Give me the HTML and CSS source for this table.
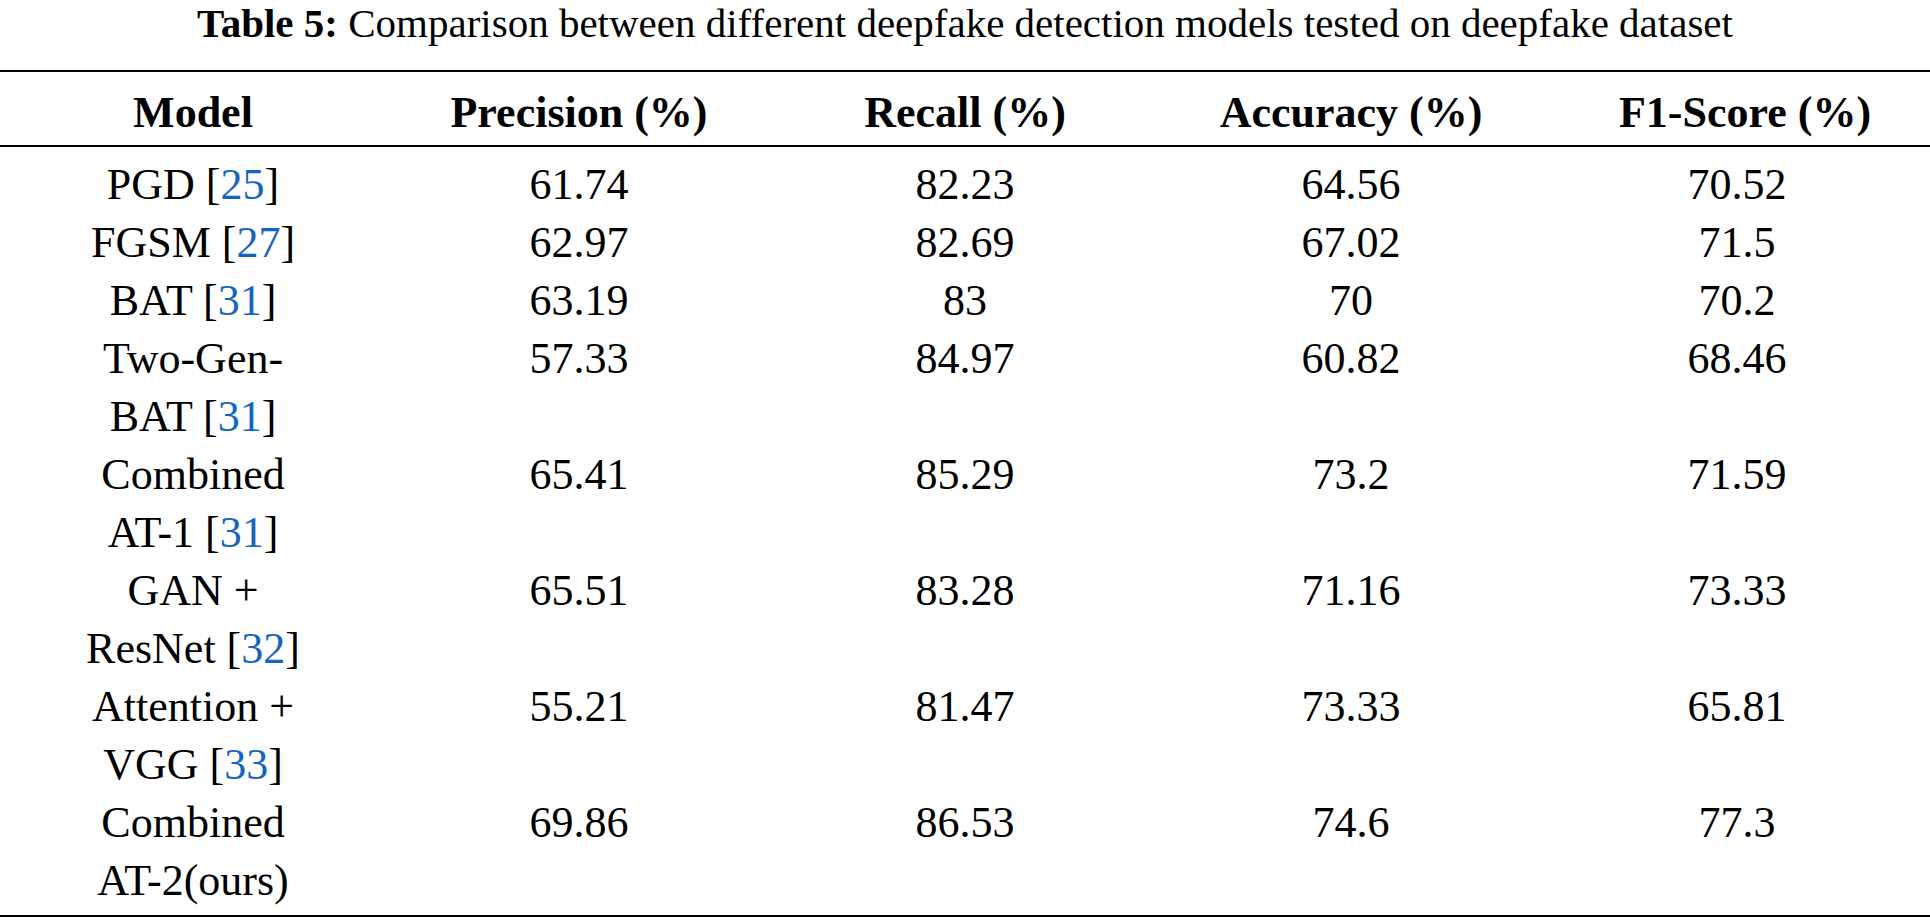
FILE: index.html
```html
<!DOCTYPE html>
<html lang="en">
<head>
<meta charset="utf-8">
<title>Table 5</title>
<link rel="stylesheet" href="styles.css">
</head>
<body>
<div class="page">
  <p class="caption"><b>Table 5:</b> Comparison between different deepfake detection models tested on deepfake dataset</p>
  <table class="results">
    <colgroup>
      <col class="col"><col class="col"><col class="col"><col class="col"><col class="col">
    </colgroup>
    <thead>
      <tr>
        <th>Model</th>
        <th>Precision (%)</th>
        <th>Recall (%)</th>
        <th>Accuracy (%)</th>
        <th class="f1">F1-Score (%)</th>
      </tr>
    </thead>
    <tbody>
      <tr><td class="model"><span class="line">PGD [<a class="ref">25</a>]</span></td><td>61.74</td><td>82.23</td><td>64.56</td><td>70.52</td></tr>
      <tr><td class="model"><span class="line">FGSM [<a class="ref">27</a>]</span></td><td>62.97</td><td>82.69</td><td>67.02</td><td>71.5</td></tr>
      <tr><td class="model"><span class="line">BAT [<a class="ref">31</a>]</span></td><td>63.19</td><td>83</td><td>70</td><td>70.2</td></tr>
      <tr><td class="model"><span class="line">Two-Gen-</span><span class="line">BAT [<a class="ref">31</a>]</span></td><td>57.33</td><td>84.97</td><td>60.82</td><td>68.46</td></tr>
      <tr><td class="model"><span class="line">Combined</span><span class="line">AT-1 [<a class="ref">31</a>]</span></td><td>65.41</td><td>85.29</td><td>73.2</td><td>71.59</td></tr>
      <tr><td class="model"><span class="line">GAN +</span><span class="line">ResNet [<a class="ref">32</a>]</span></td><td>65.51</td><td>83.28</td><td>71.16</td><td>73.33</td></tr>
      <tr><td class="model"><span class="line">Attention +</span><span class="line">VGG [<a class="ref">33</a>]</span></td><td>55.21</td><td>81.47</td><td>73.33</td><td>65.81</td></tr>
      <tr><td class="model"><span class="line">Combined</span><span class="line">AT-2(ours)</span></td><td>69.86</td><td>86.53</td><td>74.6</td><td>77.3</td></tr>
    </tbody>
  </table>
</div>
</body>
</html>
```
FILE: styles.css
```css
html, body {
  margin: 0;
  padding: 0;
  background: #ffffff;
}

.page {
  width: 1930px;
  font-family: "Liberation Serif", "Times New Roman", serif;
  color: #000000;
}

.caption {
  margin: 0 0 24px 0;
  font-size: 41px;
  line-height: 46px;
  text-align: center;
  white-space: nowrap;
}

.caption b {
  font-weight: bold;
}

.results {
  width: 1930px;
  border-collapse: collapse;
  table-layout: fixed;
  border-top: 2px solid #000000;
  border-bottom: 2px solid #000000;
  font-size: 44px;
  line-height: 58px;
}

.col {
  width: 386px;
}

.results th {
  font-weight: bold;
  text-align: center;
  padding: 12px 0 3px 0;
  border-bottom: 2px solid #000000;
  white-space: nowrap;
}

.results th.f1 {
  padding-left: 16px;
}

.results td {
  text-align: center;
  vertical-align: top;
  padding: 0;
}

.results td.model {
  padding: 0 60px;
}

.line {
  display: block;
  white-space: nowrap;
}

.results tbody tr:first-child td {
  padding-top: 9px;
}

.results tbody tr:last-child td {
  padding-bottom: 5px;
}

.ref {
  color: #1565c0;
  text-decoration: none;
}
```
